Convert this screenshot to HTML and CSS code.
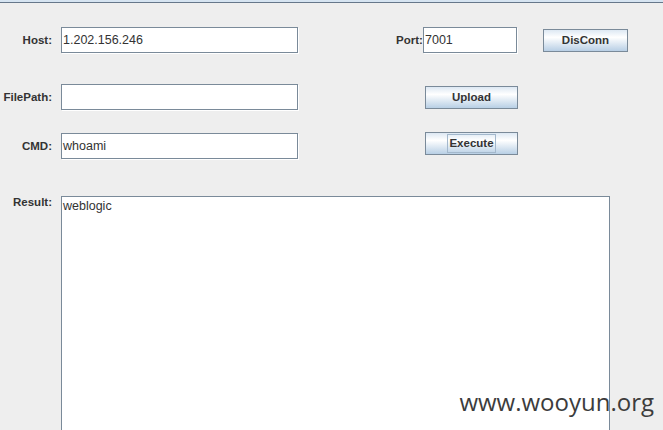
FILE: index.html
```html
<!DOCTYPE html>
<html>
<head>
<meta charset="utf-8">
<link rel="stylesheet" href="styles.css">
</head>
<body>
<div class="titlebar"></div>
<div class="form">
  <div class="row row-host">
    <div class="label">Host:</div>
    <div class="field field-wide">1.202.156.246</div>
    <div class="label label-port">Port:</div>
    <div class="field field-port">7001</div>
    <div class="btn btn-disconn">DisConn</div>
  </div>
  <div class="row row-path">
    <div class="label">FilePath:</div>
    <div class="field field-wide"></div>
    <div class="btn btn-action">Upload</div>
  </div>
  <div class="row row-cmd">
    <div class="label">CMD:</div>
    <div class="field field-wide">whoami</div>
    <div class="btn btn-action btn-exec"><span class="focus">Execute</span></div>
  </div>
  <div class="row row-result">
    <div class="label label-result">Result:</div>
    <div class="result">weblogic</div>
  </div>
</div>
<div class="watermark">www.wooyun.org</div>
</body>
</html>
```
FILE: styles.css
```css
html, body {
  margin: 0;
  padding: 0;
  height: 430px;
  overflow: hidden;
  background: #eeeeee;
}
body {
  position: relative;
  font-family: "Liberation Sans", Arial, sans-serif;
  color: #333333;
}
.titlebar {
  height: 2px;
  background: #d6e4f1;
  border-bottom: 1px solid #66778a;
}
.form {
  padding-top: 24px;
}
.row {
  display: flex;
  align-items: center;
}
.row-host { height: 26px; }
.row-path { height: 26px; margin-top: 31px; }
.row-cmd { height: 26px; margin-top: 23px; }
.row-result { margin-top: 37px; align-items: flex-start; }
.label {
  width: 52px;
  margin-right: 9px;
  text-align: right;
  font-weight: bold;
  font-size: 11.5px;
  color: #333333;
  flex-shrink: 0;
}
.label-port {
  width: 26px;
  margin-left: 98px;
  margin-right: 1px;
}
.label-result {
  line-height: 14px;
  margin-top: -1px;
}
.field {
  box-sizing: border-box;
  height: 26px;
  background: #ffffff;
  border: 1px solid #7a8a99;
  box-shadow: 1px 1px 0 #ffffff;
  font-size: 12.5px;
  line-height: 24px;
  padding-left: 1px;
  color: #333333;
  flex-shrink: 0;
}
.field-wide { width: 237px; }
.field-port { width: 94px; }
.btn {
  box-sizing: border-box;
  height: 23px;
  border: 1px solid #7a8a99;
  background: linear-gradient(#dde8f3 0%, #ffffff 35%, #b8cfe5 100%);
  font-weight: bold;
  font-size: 11.5px;
  color: #333333;
  display: flex;
  align-items: center;
  justify-content: center;
  flex-shrink: 0;
}
.btn-disconn {
  width: 85px;
  margin-left: 26px;
}
.btn-action {
  width: 93px;
  margin-left: 127px;
}
.btn-exec {
  align-self: flex-start;
  margin-top: -1px;
}
.focus {
  border: 1px solid #a3b8cc;
  padding: 0 1px;
  height: 17px;
  line-height: 17px;
}
.result {
  box-sizing: border-box;
  width: 549px;
  height: 234px;
  background: #ffffff;
  border: 1px solid #7a8a99;
  border-bottom: none;
  font-size: 12.5px;
  line-height: 15px;
  padding: 2px 1px;
  color: #333333;
}
.watermark {
  position: absolute;
  right: 9px;
  bottom: 14px;
  font-family: "Open Sans", "DejaVu Sans", sans-serif;
  font-size: 24px;
  color: #3c3c3c;
  line-height: 28px;
}
```
